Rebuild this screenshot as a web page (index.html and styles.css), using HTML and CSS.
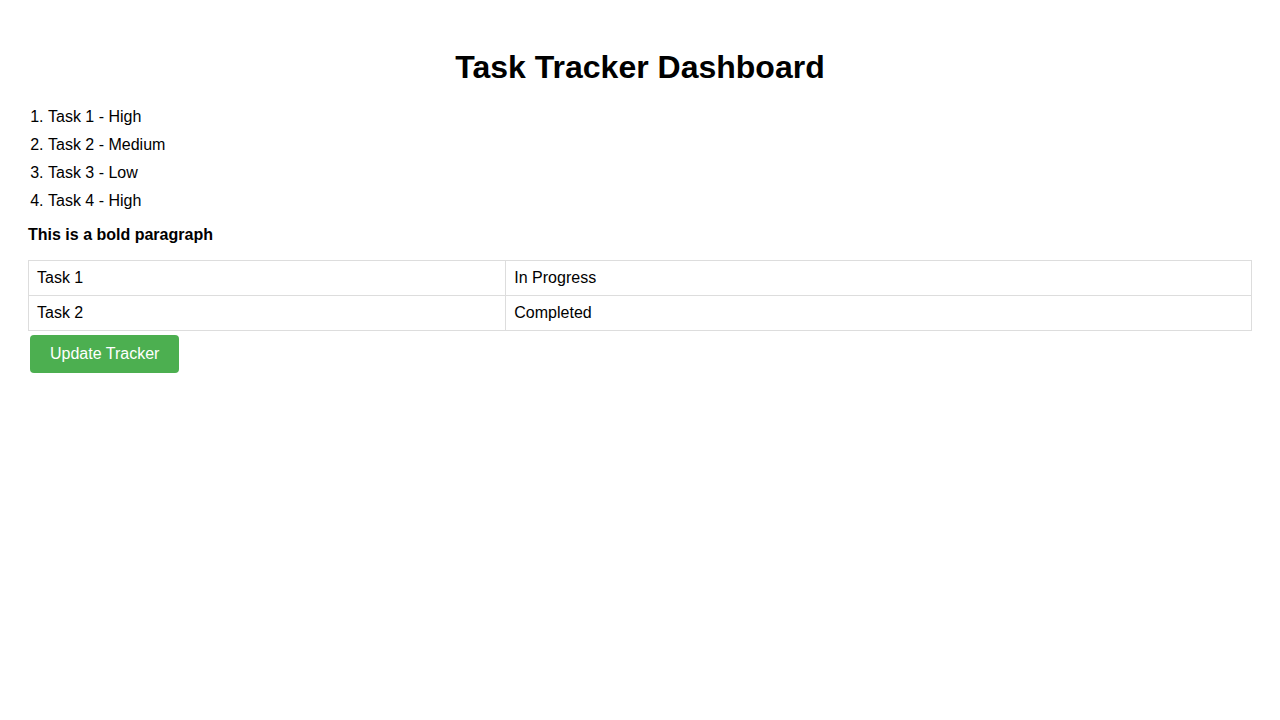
FILE: index.html
```html
<!DOCTYPE html>
<html>
<head>
<meta charset="utf-8">
<title>Task Tracker Dashboard</title>
<link rel="stylesheet" href="styles.css">
</head>
<body>
<h1 class="title">Task Tracker Dashboard</h1>
<ol class="tasks">
  <li>Task 1 - High</li>
  <li>Task 2 - Medium</li>
  <li>Task 3 - Low</li>
  <li>Task 4 - High</li>
</ol>
<p class="bold">This is a bold paragraph</p>
<table class="tracker">
  <tr><td>Task 1</td><td>In Progress</td></tr>
  <tr><td>Task 2</td><td>Completed</td></tr>
</table>
<div class="actions"><button class="btn">Update Tracker</button></div>
</body>
</html>
```

FILE: styles.css
```css
body {
  margin: 8px;
  padding: 20px;
  font-family: "Liberation Sans", Arial, sans-serif;
  font-size: 16px;
  color: #000;
  background: #fff;
}
.title {
  text-align: center;
  font-size: 32px;
  font-weight: bold;
  margin: 21.44px 0;
}
.tasks {
  margin: 16px 0;
  padding-left: 20px;
}
.tasks li {
  margin-bottom: 10px;
}
.tasks li:last-child {
  margin-bottom: 0;
}
.bold {
  font-weight: bold;
  margin: 16px 0;
}
.tracker {
  width: 100%;
  border-collapse: collapse;
}
.tracker td {
  border: 1px solid #ddd;
  padding: 8px;
  text-align: left;
}
.actions {
  margin: 4px 2px 0;
}
.btn {
  background: #4CAF50;
  color: #fff;
  border: none;
  border-radius: 4px;
  padding: 10px 20px;
  font-family: "Liberation Sans", Arial, sans-serif;
  font-size: 16px;
  cursor: pointer;
}
```
